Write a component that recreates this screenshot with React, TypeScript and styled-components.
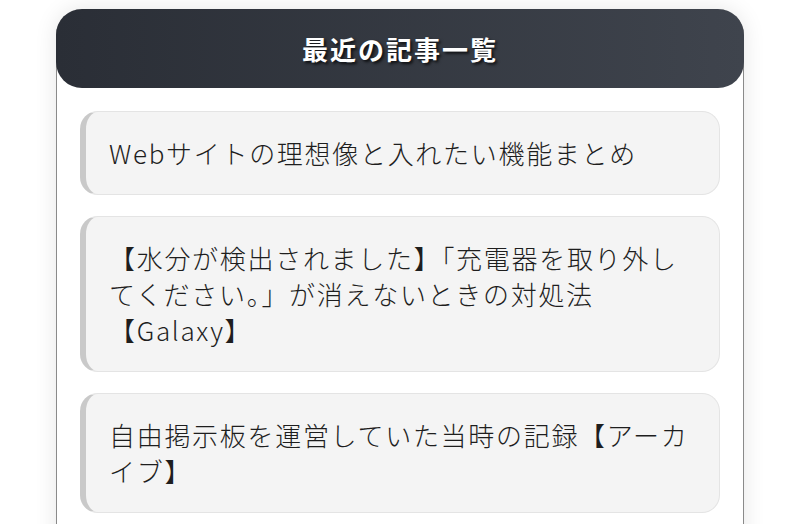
import styled, { createGlobalStyle } from "styled-components";

const GlobalStyle = createGlobalStyle`
  body {
    margin: 0;
    background: #fff;
    font-family: "Noto Sans CJK JP", "Noto Sans", sans-serif;
  }
`;

const Page = styled.div`
  padding-top: 9px;
  display: flex;
  justify-content: center;
`;

const Widget = styled.section`
  width: 688px;
  box-sizing: border-box;
  border: 1px solid #8a8a8a;
  border-top: 0;
  border-radius: 26px 26px 0 0;
  box-shadow: 0 0 22px rgba(0, 0, 0, 0.1);
  background: #fff;
  min-height: 560px;
`;

const Header = styled.h2`
  margin: 0 -1px;
  height: 79px;
  display: flex;
  align-items: center;
  justify-content: center;
  border-radius: 26px;
  background: linear-gradient(90deg, #2a2e36 0%, #3f444d 100%);
  color: #fff;
  font-size: 26px;
  font-weight: 700;
  letter-spacing: 2px;
  text-shadow: 2px 2px 3px rgba(0, 0, 0, 0.75);
`;

const List = styled.ul`
  list-style: none;
  margin: 0;
  padding: 23px 23px 0;
  display: flex;
  flex-direction: column;
  gap: 21px;
`;

const Item = styled.li`
  background: #f4f4f4;
  border: 1px solid #e4e4e4;
  border-left: 6px solid #c9c9c9;
  border-radius: 18px;
  padding: 23px 24px 23px 23px;
  color: #1e1e1e;
  font-size: 26px;
  font-weight: 300;
  line-height: 36px;
  letter-spacing: 1.7px;
`;

const posts: string[] = [
  "Webサイトの理想像と入れたい機能まとめ",
  "【水分が検出されました】「充電器を取り外してください。」が消えないときの対処法【Galaxy】",
  "自由掲示板を運営していた当時の記録【アーカイブ】",
];

function App() {
  return (
    <>
      <GlobalStyle />
      <Page>
        <Widget>
          <Header>最近の記事一覧</Header>
          <List>
            {posts.map((title) => (
              <Item key={title}>{title}</Item>
            ))}
          </List>
        </Widget>
      </Page>
    </>
  );
}

export default App;
